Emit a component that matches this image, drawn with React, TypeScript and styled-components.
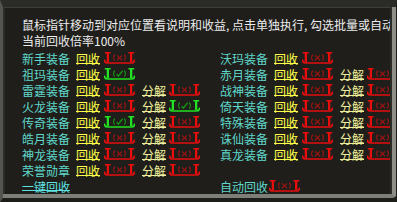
import React from "react"
import styled, { createGlobalStyle } from "styled-components"

const GlobalStyle = createGlobalStyle`
    html, body {
        margin: 0;
        padding: 0;
        background: #1f1e1a;
    }
    body {
        font-family: "Noto Sans CJK SC", "Noto Sans", sans-serif;
    }
`

const Panel = styled.div`
    position: relative;
    width: 397px;
    height: 202px;
    overflow: hidden;
    box-sizing: border-box;
    padding: 17px 0 0 22px;
    background: #1f1e1a;
    font-size: 12px;
    line-height: 16px;
`

const Frame = styled.div`
    position: absolute;
    inset: 0;
    pointer-events: none;
    box-sizing: border-box;
    border-top: 7px solid #2b2b28;
    border-left: 3px solid #55554f;
    border-right: 1px solid #1b1b19;
    border-bottom: 4px solid #1d1d1a;
`

const FrameLight = styled.div`
    height: 100%;
    box-sizing: border-box;
    border-right: 4px solid #8e8e87;
    border-bottom: 4px solid #7e7e78;
    border-bottom-right-radius: 4px;
`

const FrameInner = styled.div`
    height: 100%;
    box-sizing: border-box;
    border-top: 1px solid #3d3d39;
    border-left: 2px solid #2c2c29;
    border-right: 2px solid #2c2c29;
`

const Note = styled.div`
    color: #ececec;
    white-space: nowrap;
`

const Comma = styled.span`
    display: inline-block;
    width: 6px;
`

const Board = styled.div`
    margin-top: 2px;
    display: grid;
    grid-template-columns: 198px 198px;
    grid-auto-rows: 16px;
`

const Row = styled.div`
    display: flex;
    align-items: flex-start;
    white-space: nowrap;
`

const Label = styled.span`
    color: #5fd8cb;
    width: 48px;
`

const Action = styled.span<{ $pale?: boolean; $gap: number }>`
    color: ${p => (p.$pale ? "#eeee9c" : "#ffff4a")};
    margin-left: ${p => p.$gap}px;
    text-decoration: underline;
    text-underline-offset: -1px;
`

const AllLink = styled.span`
    color: #5ee0e0;
    text-decoration: underline;
    text-underline-offset: -2px;
`

const Box = styled.svg<{ $gap: number }>`
    display: block;
    flex: none;
    width: 31px;
    height: 12px;
    margin-top: 1px;
    margin-left: ${p => p.$gap}px;
`

type Tick = "x" | "v"

const CheckBox: React.FC<{ state: Tick; gap: number }> = ({ state, gap }) => {
    const on = state === "v"
    const bright = on ? "#22e022" : "#e80e0e"
    const dim = on ? "#149414" : "#9a1414"
    return (
        <Box $gap={gap} viewBox="0 0 31 12">
            <path d="M0.8 0 H6.6 V1.6 H5 V10 H2.7 V1.6 H0.8 Z" fill={bright} />
            <path d="M30.2 0 H24.4 V1.6 H26 V10 H28.3 V1.6 H30.2 Z" fill={bright} />
            <path d="M0.2 7.6 Q0.6 11 3.6 11 H27.4 Q30.4 11 30.8 7.6" stroke={bright} strokeWidth="1.7" fill="none" />
            <path d="M10.6 2.4 Q8.6 5.6 10.6 8.8" stroke={dim} strokeWidth="1.1" fill="none" />
            <path d="M20.4 2.4 Q22.4 5.6 20.4 8.8" stroke={dim} strokeWidth="1.1" fill="none" />
            {on ? (
                <path d="M12.6 6.2 L14.4 8.2 L18.6 2.8" stroke={dim} strokeWidth="1.4" fill="none" />
            ) : (
                <path d="M13 3.4 L18 8.2 M18 3.4 L13 8.2" stroke={dim} strokeWidth="1.3" fill="none" />
            )}
        </Box>
    )
}

interface Item {
    label: string
    recycle: Tick
    split?: Tick
}

const leftItems: Item[] = [
    { label: "新手装备", recycle: "x" },
    { label: "祖玛装备", recycle: "v" },
    { label: "雷霆装备", recycle: "x", split: "x" },
    { label: "火龙装备", recycle: "x", split: "v" },
    { label: "传奇装备", recycle: "v", split: "x" },
    { label: "皓月装备", recycle: "x", split: "x" },
    { label: "神龙装备", recycle: "x", split: "x" },
    { label: "荣誉勋章", recycle: "x", split: "x" },
]

const rightItems: (Item | null)[] = [
    { label: "沃玛装备", recycle: "x" },
    { label: "赤月装备", recycle: "x", split: "x" },
    { label: "战神装备", recycle: "x", split: "x" },
    { label: "倚天装备", recycle: "x", split: "x" },
    { label: "特殊装备", recycle: "x", split: "x" },
    { label: "诛仙装备", recycle: "x", split: "x" },
    { label: "真龙装备", recycle: "x", split: "x" },
    null,
]

const EquipRow: React.FC<{ item: Item | null }> = ({ item }) => {
    if (!item) return <Row />
    return (
        <Row>
            <Label>{item.label}</Label>
            <Action $gap={6}>回收</Action>
            <CheckBox state={item.recycle} gap={4} />
            {item.split && (
                <>
                    <Action $gap={7} $pale>分解</Action>
                    <CheckBox state={item.split} gap={3} />
                </>
            )}
        </Row>
    )
}

export default function App() {
    const rows = leftItems.map((item, i) => [item, rightItems[i]] as const)
    return (
        <>
            <GlobalStyle />
            <Panel>
                <Note>
                    鼠标指针移动到对应位置看说明和收益<Comma>,</Comma>点击单独执行<Comma>,</Comma>勾选批量或自动
                </Note>
                <Note>当前回收倍率100%</Note>
                <Board>
                    {rows.map(([l, r], i) => (
                        <React.Fragment key={i}>
                            <EquipRow item={l} />
                            <EquipRow item={r} />
                        </React.Fragment>
                    ))}
                    <Row>
                        <AllLink>一键回收</AllLink>
                    </Row>
                    <Row>
                        <Label>自动回收</Label>
                        <CheckBox state="x" gap={1} />
                    </Row>
                </Board>
                <Frame>
                    <FrameLight>
                        <FrameInner />
                    </FrameLight>
                </Frame>
            </Panel>
        </>
    )
}
